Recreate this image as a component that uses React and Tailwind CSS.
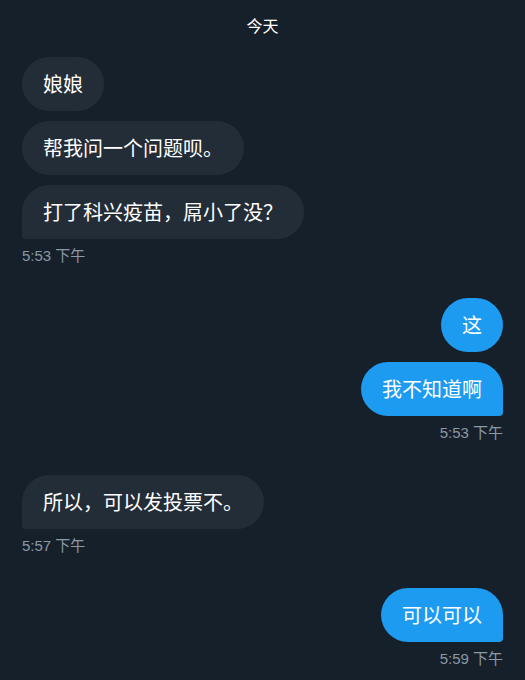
import React from 'react';

const groups = [
  { side: 'left', time: '5:53 下午', messages: ['娘娘', '帮我问一个问题呗。', '打了科兴疫苗，屌小了没？'] },
  { side: 'right', time: '5:53 下午', messages: ['这', '我不知道啊'] },
  { side: 'left', time: '5:57 下午', messages: ['所以，可以发投票不。'] },
  { side: 'right', time: '5:59 下午', messages: ['可以可以'] },
];

const Bubble = ({ text, side, last }) => {
  const base = 'px-[21px] py-[15px] text-[20px] leading-[24px] text-white rounded-[27px]';
  const color = side === 'left' ? 'bg-[#232d38]' : 'bg-[#1d9bf0]';
  let corner = '';
  if (last) corner = side === 'left' ? 'rounded-bl-[4px]' : 'rounded-br-[4px]';
  return <div className={`${base} ${color} ${corner}`}>{text}</div>;
};

const Group = ({ group }) => {
  const align = group.side === 'left' ? 'items-start' : 'items-end';
  return (
    <div className={`flex flex-col ${align}`}>
      <div className={`flex flex-col gap-[10px] ${align}`}>
        {group.messages.map((m, i) => (
          <Bubble key={i} text={m} side={group.side} last={i === group.messages.length - 1} />
        ))}
      </div>
      <div
        className="mt-[7px] text-[15px] leading-[20px] text-[#8b98a5]"
        style={{ fontFamily: '"Liberation Sans", "Noto Sans CJK SC", sans-serif' }}
      >
        {group.time}
      </div>
    </div>
  );
}

export default function App() {
  return (
    <div
      className="w-[525px] h-[680px] overflow-hidden bg-[#16202b] px-[22px]"
      style={{ fontFamily: '"Noto Sans CJK SC", "Noto Sans", sans-serif' }}
    >
      <div className="pt-[14px] text-center text-[16px] leading-[22px] font-normal text-white">今天</div>
      <div className="mt-[21px] flex flex-col gap-[32px]">
        {groups.map((g, i) => (
          <Group key={i} group={g} />
        ))}
      </div>
    </div>
  );
}
